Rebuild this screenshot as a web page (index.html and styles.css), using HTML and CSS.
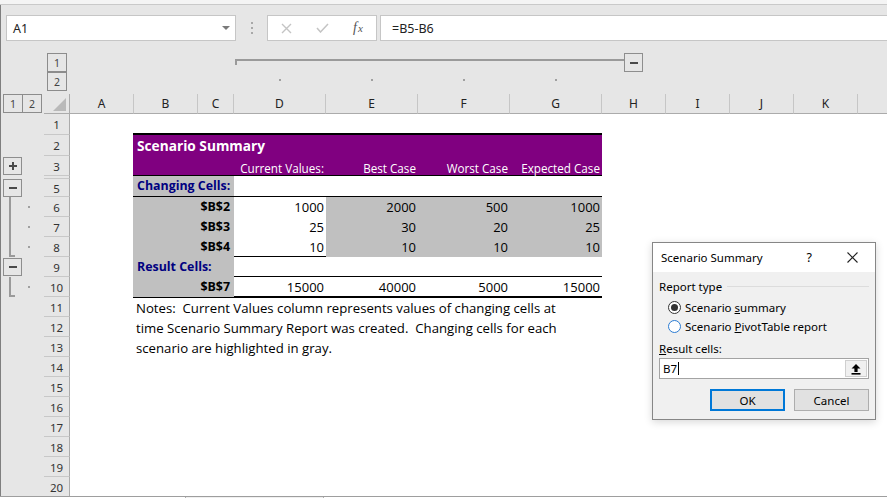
FILE: index.html
```html
<!DOCTYPE html>
<html>
<head>
<meta charset="utf-8">
<title>Scenario Summary</title>
<link rel="stylesheet" href="styles.css">
</head>
<body>
<div class="app">
  <div class="ribbon"></div>
  <div class="fbar">
    <div class="namebox"><span>A1</span><svg class="nb-arrow" width="8" height="4" viewBox="0 0 8 4"><path d="M0 0H8L4 4Z" fill="#7a7a7a"/></svg></div>
    <div class="grip"><i></i><i></i><i></i></div>
    <div class="fbtns">
      <svg class="ic-x" width="11" height="11" viewBox="0 0 11 11"><path d="M1 1L10 10M10 1L1 10" stroke="#c4c4c4" stroke-width="1.4"/></svg>
      <svg class="ic-ok" width="13" height="10" viewBox="0 0 13 10"><path d="M1 5L4.5 9L12 1" stroke="#c4c4c4" stroke-width="1.5" fill="none"/></svg>
      <span class="fx"><i>f</i><i class="fx-x">x</i></span>
    </div>
    <div class="finput">=B5-B6</div>
  </div>

  <div class="sheet">
    <div class="left">
      <div class="lvl-col"><span class="lvbtn">1</span><span class="lvbtn">2</span></div>
      <div class="corner-row">
        <div class="lv-row"><span class="lvbtn">1</span><span class="lvbtn second">2</span></div>
        <div class="corner"><svg width="25" height="19" viewBox="0 0 25 19"><path d="M9 17H22V4Z" fill="#b9b9b9"/></svg></div>
      </div>
      <div class="lrow h21"><div class="oc"></div><div class="rh">1</div></div>
      <div class="lrow h21"><div class="oc"></div><div class="rh">2</div></div>
      <div class="lrow h20"><div class="oc"><span class="obox"><svg width="8" height="8" viewBox="0 0 8 8"><path d="M0 3H8V5H0ZM3 0H5V8H3Z" fill="#4a4a4a"/></svg></span></div><div class="rh">3</div></div>
      <div class="lrow h3"><div class="oc"></div><div class="rh"></div></div>
      <div class="lrow h18"><div class="oc"><span class="obox"><svg width="8" height="8" viewBox="0 0 8 8"><path d="M0 3H8V5H0Z" fill="#4a4a4a"/></svg></span></div><div class="rh">5</div></div>
      <div class="lrow h20"><div class="oc"><span class="vl"></span><span class="dot"></span></div><div class="rh">6</div></div>
      <div class="lrow h20"><div class="oc"><span class="vl"></span><span class="dot"></span></div><div class="rh">7</div></div>
      <div class="lrow h20"><div class="oc"><span class="vl end"></span><span class="dot"></span></div><div class="rh">8</div></div>
      <div class="lrow h20"><div class="oc"><span class="obox"><svg width="8" height="8" viewBox="0 0 8 8"><path d="M0 3H8V5H0Z" fill="#4a4a4a"/></svg></span></div><div class="rh">9</div></div>
      <div class="lrow h20"><div class="oc"><span class="vl end"></span><span class="dot"></span></div><div class="rh">10</div></div>
      <div class="lrow h20"><div class="oc"></div><div class="rh">11</div></div>
      <div class="lrow h20"><div class="oc"></div><div class="rh">12</div></div>
      <div class="lrow h20"><div class="oc"></div><div class="rh">13</div></div>
      <div class="lrow h20"><div class="oc"></div><div class="rh">14</div></div>
      <div class="lrow h20"><div class="oc"></div><div class="rh">15</div></div>
      <div class="lrow h20"><div class="oc"></div><div class="rh">16</div></div>
      <div class="lrow h20"><div class="oc"></div><div class="rh">17</div></div>
      <div class="lrow h20"><div class="oc"></div><div class="rh">18</div></div>
      <div class="lrow h20"><div class="oc"></div><div class="rh">19</div></div>
      <div class="lrow h20"><div class="oc"></div><div class="rh">20</div></div>
    </div>

    <div class="main">
      <div class="col-outline">
        <div class="bracket-row">
          <span class="bline"></span>
          <span class="obox cbox"><svg width="8" height="8" viewBox="0 0 8 8"><path d="M0 3H8V5H0Z" fill="#4a4a4a"/></svg></span>
        </div>
        <div class="dot-row cols">
          <span></span><span></span><span></span>
          <span class="cdot"></span><span class="cdot"></span><span class="cdot"></span><span class="cdot"></span>
          <span></span><span></span><span></span><span></span><span></span>
        </div>
      </div>
      <div class="colheads cols">
        <span>A</span><span>B</span><span>C</span><span>D</span><span>E</span><span>F</span><span>G</span><span>H</span><span>I</span><span>J</span><span>K</span><span class="last"></span>
      </div>
      <div class="cells">
        <div class="tbl">
          <div class="tr t-title">Scenario Summary</div>
          <div class="tr t-head"><span></span><span>Current Values:</span><span>Best Case</span><span>Worst Case</span><span>Expected Case</span></div>
          <div class="tr t-sec r5"><span class="lab sec">Changing Cells:</span><span></span><span></span><span></span><span></span></div>
          <div class="tr t-val"><span class="lab">$B$2</span><span>1000</span><span class="g">2000</span><span class="g">500</span><span class="g">1000</span></div>
          <div class="tr t-val"><span class="lab">$B$3</span><span>25</span><span class="g">30</span><span class="g">20</span><span class="g">25</span></div>
          <div class="tr t-val r8"><span class="lab">$B$4</span><span>10</span><span class="g">10</span><span class="g">10</span><span class="g">10</span></div>
          <div class="tr t-sec r9"><span class="lab sec">Result Cells:</span><span></span><span></span><span></span><span></span></div>
          <div class="tr t-res"><span class="lab">$B$7</span><span>15000</span><span>40000</span><span>5000</span><span>15000</span></div>
        </div>
        <div class="notes">
          <div class="nline">Notes:  Current Values column represents values of changing cells at</div>
          <div class="nline">time Scenario Summary Report was created.  Changing cells for each</div>
          <div class="nline">scenario are highlighted in gray.</div>
        </div>
      </div>
    </div>
  </div>

  <div class="bottom"><span class="bseg1"></span><span class="bseg2"></span><span class="bseg3"></span></div>

  <div class="dlg">
    <div class="dlg-title">
      <span class="dlg-name">Scenario Summary</span>
      <span class="dlg-help">?</span>
      <svg class="dlg-close" width="11" height="11" viewBox="0 0 11 11"><path d="M0.5 0.5L10.5 10.5M10.5 0.5L0.5 10.5" stroke="#222" stroke-width="1.1"/></svg>
    </div>
    <div class="dlg-body">
      <div class="grp"><span>Report type</span><span class="grp-line"></span></div>
      <div class="radio r1"><span class="rb on"></span><span>Scenario <u>s</u>ummary</span></div>
      <div class="radio r2"><span class="rb blue"></span><span>Scenario <u>P</u>ivotTable report</span></div>
      <div class="rlab"><u>R</u>esult cells:</div>
      <div class="ref">
        <span class="ref-text">B7<span class="caret"></span></span>
        <span class="ref-btn"><svg width="10" height="12" viewBox="0 0 10 12"><path d="M5 1L9.5 5.5H6.6V9H3.4V5.5H0.5Z" fill="#000"/><rect x="0.5" y="10" width="9" height="1.6" fill="#000"/></svg></span>
      </div>
      <div class="btns"><span class="btn ok">OK</span><span class="btn">Cancel</span></div>
    </div>
  </div>
</div>
</body>
</html>
```

FILE: styles.css
```css
* { box-sizing: border-box; margin: 0; padding: 0; }
html, body { width: 887px; height: 498px; overflow: hidden; }
body { background: #e6e6e6; font-family: "Noto Sans", "Open Sans", sans-serif; color: #222; }
.app { position: relative; width: 887px; height: 498px; display: flex; flex-direction: column; }

.ribbon { flex: none; height: 5px; background: #f4f4f4; border-bottom: 1px solid #c9c9c9; }

.fbar { flex: none; height: 36px; display: flex; align-items: flex-start; padding: 10px 0 0 5px; border-left: 1px solid #7f7f7f; }
.namebox { width: 230px; height: 26px; background: #fff; border: 1px solid #c6c6c6; display: flex; align-items: center; padding-left: 6px; font-size: 12.5px; color: #222; }
.nb-arrow { margin-left: auto; margin-right: 5px; }
.grip { width: 31px; height: 26px; display: flex; flex-direction: column; align-items: center; padding-top: 7px; gap: 3px; }
.grip i { display: block; width: 2px; height: 2px; background: #a8a8a8; }
.fbtns { width: 110px; height: 26px; background: #fff; border: 1px solid #c6c6c6; display: flex; align-items: center; padding-left: 13px; }
.ic-ok { margin-left: 24px; }
.fx { margin-left: 24px; font-family: "Liberation Serif", serif; font-size: 14px; color: #555; }
.fx-x { font-size: 11px; margin-left: 1px; }
.finput { flex: 1; height: 26px; margin-left: 3px; margin-right: -10px; background: #fff; border: 1px solid #c6c6c6; padding-left: 11px; display: flex; align-items: center; font-size: 12.5px; color: #222; }

.sheet { flex: none; height: 455px; display: flex; overflow: hidden; border-left: 1px solid #7f7f7f; }
.left { flex: none; width: 69px; display: flex; flex-direction: column; }
.lvl-col { flex: none; height: 53px; padding: 12px 0 0 46px; display: flex; flex-direction: column; }
.lvbtn { width: 20px; height: 19px; border: 1px solid #8c8c8c; font-size: 10.5px; color: #444; display: flex; align-items: center; justify-content: center; }
.corner-row { flex: none; height: 20px; display: flex; }
.lv-row { width: 43px; padding-left: 2px; display: flex; align-items: flex-start; }
.lv-row .second { margin-left: -1px; }
.corner { width: 26px; border-right: 1px solid #ababab; border-bottom: 1px solid #ababab; }
.corner svg { display: block; }

.lrow { flex: none; display: flex; }
.h21 { height: 21px; }
.h20 { height: 20px; }
.h18 { height: 18px; }
.h3 { height: 3px; }
.oc { width: 43px; display: flex; align-items: center; padding-left: 2px; }
.rh { width: 26px; border-right: 1px solid #ababab; border-bottom: 1px solid #c8c8c8; font-size: 11.5px; color: #333; display: flex; align-items: center; justify-content: center; padding-top: 1px; }
.obox { width: 19px; height: 18px; border: 1px solid #8e8e8e; display: flex; align-items: center; justify-content: center; }
.obox svg { display: block; }
.vl { align-self: stretch; width: 6px; margin-left: 6px; border-left: 2px solid #9a9a9a; }
.vl.end { border-bottom: 2px solid #9a9a9a; }
.dot { width: 2px; height: 2px; margin-left: 13px; background: #a0a0a0; }

.main { flex: 1; display: flex; flex-direction: column; overflow: hidden; }
.cols { display: grid; grid-template-columns: 64px 64px 36px 92px 92px 92px 92px 64px 64px 64px 64px 1fr; }
.col-outline { flex: none; height: 53px; padding-top: 12px; }
.bracket-row { display: flex; margin-left: 165px; height: 19px; }
.bline { width: 389px; height: 6px; margin-top: 6px; border-top: 2px solid #9a9a9a; border-left: 2px solid #9a9a9a; }
.cbox { height: 19px; }
.dot-row { margin-top: 7px; height: 2px; }
.cdot { justify-self: center; width: 2px; height: 2px; background: #a0a0a0; }
.colheads { flex: none; height: 20px; }
.colheads span { border-right: 1px solid #c6c6c6; border-bottom: 1px solid #ababab; font-size: 12px; color: #222; display: flex; align-items: center; justify-content: center; }
.colheads .last { border-right: 0; }

.cells { flex: 1; background: #fff; padding-top: 19px; font-family: "Open Sans", "Noto Sans", sans-serif; font-size: 13px; color: #000; }
.tbl { width: 469px; margin-left: 63px; border-top: 2px solid #000; border-bottom: 2px solid #000; }
.tr { display: grid; grid-template-columns: 101px 92px 92px 92px 92px; }
.tr > span { text-align: right; padding-right: 2px; line-height: 20px; white-space: nowrap; }
.t-title { height: 20px; background: #800080; color: #fff; font-weight: bold; font-size: 13.7px; line-height: 21px; padding-left: 4px; display: block; }
.t-head { height: 21px; background: #800080; color: #fff; border-bottom: 1px solid #000; }
.t-head > span { padding-top: 5px; line-height: 17px; font-size: 11.7px; }
.t-sec { border-bottom: 1px solid #000; }
.r5 { height: 21px; }
.r9 { height: 20px; }
.t-val { height: 20px; }
.t-val.r8 { border-bottom: 1px solid #000; }
.t-res { height: 19px; }
.tr > .lab { background: #c0c0c0; font-weight: bold; font-size: 12.4px; padding-right: 4px; }
.tr > .lab.sec { text-align: left; padding-left: 4px; color: #000080; }
.tr > .g { background: #c0c0c0; }
.notes { margin-left: 66px; font-size: 13.2px; }
.nline { height: 20px; line-height: 20px; white-space: pre; }

.bottom { flex: none; height: 2px; border-top: 1px solid #9e9e9e; display: flex; background: #f0f0f0; }
.bseg1 { width: 186px; background: #fff; border-right: 1px solid #b0b0b0; }
.bseg2 { width: 137px; }
.bseg3 { flex: 1; background: #fff; border-left: 1px solid #b0b0b0; }

.dlg { position: absolute; left: 652px; top: 242px; width: 224px; height: 178px; border: 1px solid #868686; background: #f0f0f0; font-family: "Noto Sans", "Open Sans", sans-serif; font-size: 11.5px; color: #000; box-shadow: 0 2px 8px rgba(0,0,0,0.16); display: flex; flex-direction: column; }
.dlg-title { flex: none; height: 29px; background: #fff; display: flex; align-items: center; padding-left: 8px; }
.dlg-name { font-size: 11.5px; }
.dlg-help { margin-left: auto; font-size: 12.5px; }
.dlg-close { margin-left: 35px; margin-right: 17px; }
.dlg-body { flex: 1; display: flex; flex-direction: column; padding: 7px 6px 8px 6px; }
.grp { height: 14px; display: flex; align-items: center; }
.grp-line { flex: 1; height: 1px; background: #dcdcdc; margin-left: 5px; }
.radio { height: 13px; display: flex; align-items: center; margin-left: 9px; gap: 4px; }
.r1 { margin-top: 8px; }
.r2 { margin-top: 6px; }
.rb { width: 13px; height: 13px; border-radius: 50%; border: 1px solid #333; background: #fff; display: flex; align-items: center; justify-content: center; }
.rb.on::after { content: ""; width: 7px; height: 7px; border-radius: 50%; background: #333; }
.rb.blue { border-color: #2b7cd3; }
.rlab { height: 14px; line-height: 14px; margin-top: 9px; }
.ref { height: 21px; margin-top: 2px; border: 1px solid #a3a3a3; background: #fff; display: flex; }
.ref-text { flex: 1; padding-left: 3px; display: flex; align-items: center; }
.caret { width: 1px; height: 13px; background: #000; margin-left: 1px; }
.ref-btn { width: 22px; margin: 1px; border: 1px solid #cfcfcf; background: #f0f0f0; display: flex; align-items: center; justify-content: center; }
.btns { display: flex; justify-content: flex-end; gap: 9px; margin-top: 10px; }
.btn { width: 75px; height: 22px; border: 1px solid #adadad; background: #e1e1e1; display: flex; align-items: center; justify-content: center; }
.btn.ok { border: 2px solid #0078d7; }
```
